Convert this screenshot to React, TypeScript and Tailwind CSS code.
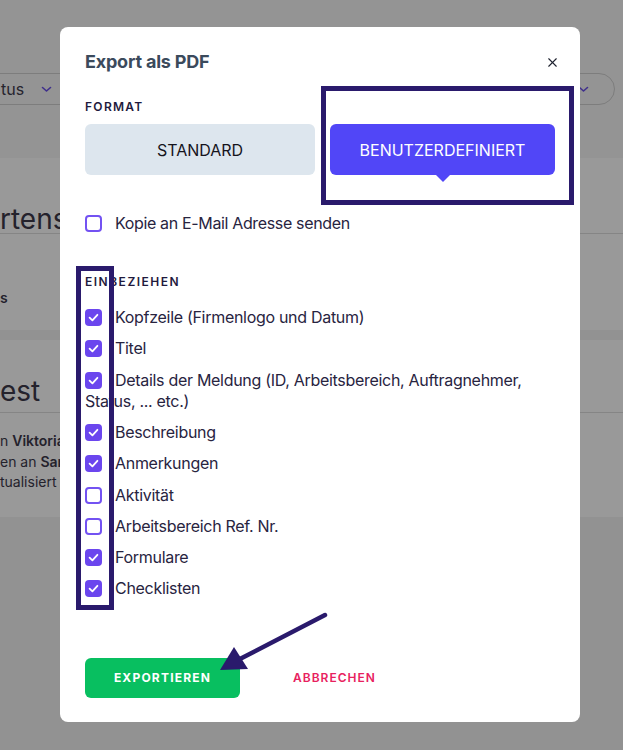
import { X } from "lucide-react";

type Item = { label: string; checked: boolean };

const items: Item[] = [
  { label: "Kopfzeile (Firmenlogo und Datum)", checked: true },
  { label: "Titel", checked: true },
  { label: "Details der Meldung (ID, Arbeitsbereich, Auftragnehmer, Status, ... etc.)", checked: true },
  { label: "Beschreibung", checked: true },
  { label: "Anmerkungen", checked: true },
  { label: "Aktivität", checked: false },
  { label: "Arbeitsbereich Ref. Nr.", checked: false },
  { label: "Formulare", checked: true },
  { label: "Checklisten", checked: true },
];

const Box = ({ checked }: { checked: boolean }) =>
  checked ? (
    <span className="inline-block align-[-3px] w-[17px] h-[17px] mr-[13px] rounded-[4px] bg-[#6b46ee]">
      <svg viewBox="0 0 17 17" width="17" height="17">
        <polyline points="4.6,8.6 7.4,11.3 12.4,5.8" fill="none" stroke="white" strokeWidth="1.8" strokeLinecap="round" strokeLinejoin="round" />
      </svg>
    </span>
  ) : (
    <span className="inline-block align-[-3px] w-[17px] h-[17px] mr-[13px] rounded-[4px] border-2 border-[#7352f2] bg-white" />
  );

const Chevron = () => (
  <svg width="11" height="7" viewBox="0 0 11 7">
    <polyline points="1.5,1.5 5.5,5 9.5,1.5" fill="none" stroke="#3f2f8c" strokeWidth="1.6" strokeLinecap="round" strokeLinejoin="round" />
  </svg>
);

export default function App() {
  return (
    <div className="relative h-[750px] overflow-hidden bg-[#929292] font-['Inter',sans-serif] text-[#26223f]">
      {/* page behind the dialog */}
      <div className="h-[158px] bg-[#949494] pt-[73px]">
        <div className="flex items-start justify-between">
          <div className="-ml-[30px] flex h-[32px] w-[150px] items-center rounded-full border border-[#7d7d7d] pl-[30px] text-[16px] text-[#26242e]">
            <span>tus</span>
            <span className="ml-[17px]">
              <Chevron />
            </span>
          </div>
          <div className="mr-[8px] flex h-[32px] w-[200px] items-center justify-end rounded-full border border-[#7d7d7d] pr-[25px]">
            <Chevron />
          </div>
        </div>
      </div>
      <div className="h-[172px] bg-[#999999]">
        <div className="h-[76px] border-b border-[#858585] pt-[45px] text-[28px] leading-[32px] text-[#24222c]">
          <span>rtenstatus</span>
        </div>
        <div className="mt-[55px] text-[14px] font-semibold leading-[18px] text-[#24222c]">
          <span>s</span>
        </div>
      </div>
      <div className="mt-[10px] h-[177px] bg-[#999999]">
        <div className="h-[73px] border-b border-[#858585] pt-[35px] text-[28px] leading-[32px] text-[#24222c]">
          <span>est</span>
        </div>
        <div className="pt-[18px] text-[14px] leading-[20.5px] text-[#24222c]">
          <div>
            n <span className="font-semibold">Viktoria</span>
          </div>
          <div>
            en an <span className="font-semibold">Sam</span>
          </div>
          <div>tualisiert</div>
        </div>
      </div>

      {/* dialog */}
      <div className="absolute left-[60px] top-[27px] h-[695px] w-[520px] rounded-[8px] bg-white px-[25px] pt-[24px]">
        <div className="flex h-[22px] items-center justify-between">
          <h2 className="text-[18px] font-bold leading-[22px] tracking-[-0.2px] text-[#3b4a5c]">Export als PDF</h2>
          <X size={15} strokeWidth={1.8} className="-mr-[5px] text-[#1f2330]" />
        </div>
        <div className="mt-[26px] text-[12px] font-semibold leading-[16px] tracking-[1.3px] text-[#1f1a3d]">FORMAT</div>
        <div className="mt-[9px] grid grid-cols-[230px_1fr] gap-[15px]">
          <div className="flex h-[51px] items-center justify-center rounded-[6px] bg-[#dde6ee] text-[16px] text-[#15141c]">STANDARD</div>
          <div className="relative flex h-[51px] items-center justify-center rounded-[6px] bg-[#5146f7] text-[16px] text-white">
            BENUTZERDEFINIERT
            <span className="absolute left-1/2 top-full -ml-[7px] border-x-[7px] border-t-[7px] border-x-transparent border-t-[#5146f7]" />
          </div>
        </div>
        <div className="mt-[38px] text-[16px] leading-[21px] tracking-[-0.35px] text-[#28243f]">
          <Box checked={false} />
          Kopie an E-Mail Adresse senden
        </div>
        <div className="mt-[40px] text-[12px] font-semibold leading-[16px] tracking-[1.5px] text-[#1f1a3d]">EINBEZIEHEN</div>
        <div className="mt-[17px] flex flex-col gap-[10px] text-[16px] leading-[21.25px] tracking-[-0.3px] text-[#28243f]">
          {items.map((it) => (
            <div key={it.label}>
              <Box checked={it.checked} />
              {it.label}
            </div>
          ))}
        </div>
        <div className="mt-[58px] flex items-center">
          <div className="flex h-[40px] w-[155px] items-center justify-center rounded-[6px] bg-[#08bf60] text-[12px] font-bold tracking-[1.2px] text-white">
            EXPORTIEREN
          </div>
          <div className="ml-[53px] text-[12px] font-semibold tracking-[1px] text-[#e8215e]">ABBRECHEN</div>
        </div>
      </div>

      {/* annotations */}
      <div className="absolute left-[321px] top-[86px] h-[119px] w-[253px] border-[5px] border-[#2a1a6c]" />
      <div className="absolute left-[76px] top-[266px] h-[344px] w-[38px] border-[5px] border-[#2a1a6c]" />
      <svg className="absolute left-0 top-0" width="623" height="750">
        <line x1="325" y1="615" x2="236" y2="661" stroke="#2a1a6c" strokeWidth="4.5" strokeLinecap="round" />
        <polygon points="220,670 234,647 248,669" fill="#2a1a6c" />
      </svg>
    </div>
  );
}
